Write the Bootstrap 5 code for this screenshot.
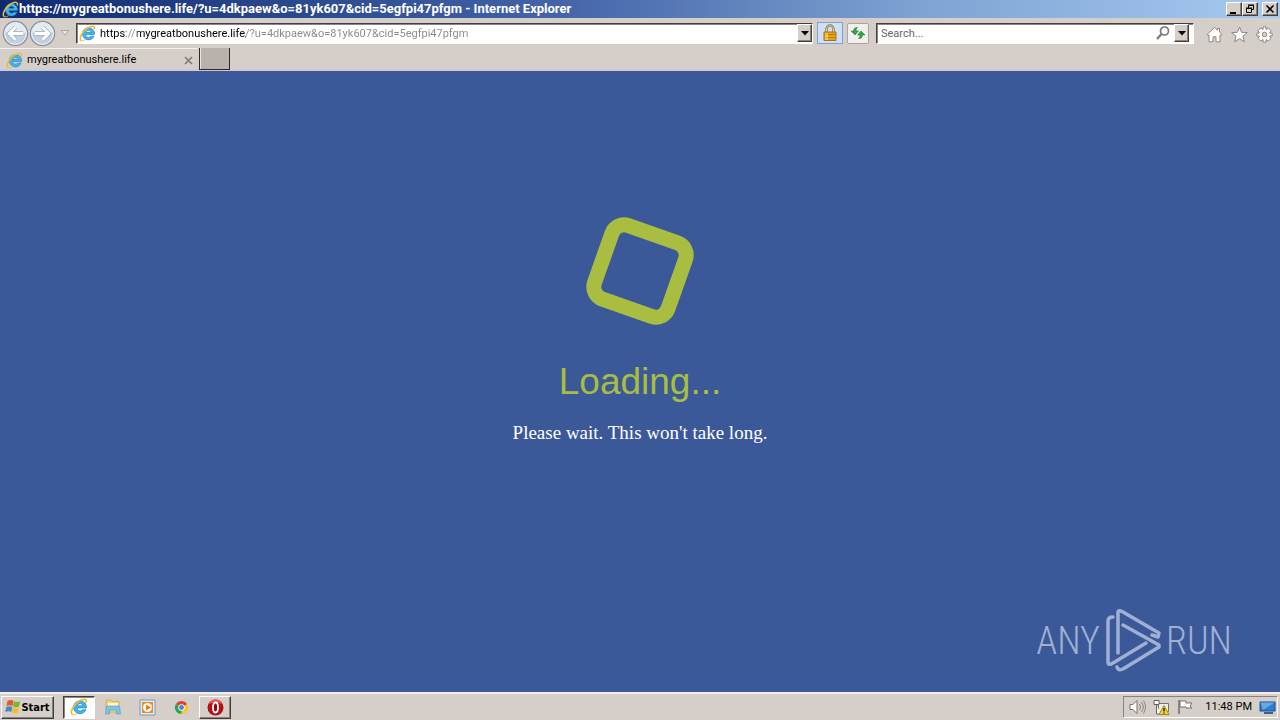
<!DOCTYPE html>
<html lang="en">
<head>
<meta charset="utf-8">
<meta name="viewport" content="width=device-width, initial-scale=1">
<title>Loading</title>
<link href="https://cdn.jsdelivr.net/npm/bootstrap@5.3.0/dist/css/bootstrap.min.css" rel="stylesheet">
<style>
:root{--face:#d6cfc9}
body{font-family:Roboto,sans-serif;font-size:11px;line-height:14px;background:var(--face);color:#000}
svg{display:block;flex:none}
button,input{font:inherit;color:inherit}
.title-strip{height:18px;padding:0 2px;background:linear-gradient(90deg,#0f2a70,#4565a8 44%,#7fa3d3 72%,#a6caf0);color:#fff;font-size:13px;line-height:18px;font-weight:700}
.raised{background:var(--face);border:1px solid;border-color:#fff #404040 #404040 #fff;box-shadow:inset -1px -1px #88827d;padding:0;border-radius:0;display:flex;align-items:center;justify-content:center}
.win-btn{width:16px;height:14px}
.tool-strip{height:30px;padding:0 7px 0 2px}
.flat{background:none;border:0;padding:0}
.recent{padding:0 4px}
.field{height:21px;background:#fff;border:1px solid;border-color:#404040 #fff #fff #404040;box-shadow:inset 1px 1px #8b8581}
.field input{border:0;outline:0;padding:2px 0 0;background-color:transparent;min-width:0}
.address-box{margin-left:2px;padding-left:2px}
.address-text{background:linear-gradient(90deg,#000 26px,#888 26px 37px,#000 37px 146px,#888 146px) text;color:transparent!important}
.search-box{width:318px;margin-left:7px}
.search-box input::placeholder{color:#666;opacity:1}
.drop{width:15px;height:18px}
.secure{width:26px;height:22px;background:#cfe0f6;border:1px solid #7aa3dc}
.reload{width:22px;height:21px;background:#f0efeb;border:1px solid #aaa5a0;border-radius:2px}
.tab-strip{height:23px;border-bottom:2px solid #c9ccd6}
.page-tab{width:198px;padding:2px 5px 0 6px;border-top:1px solid #f4f1ee}
.new-tab{width:31px;height:22px;background:#b9b1ac;border:solid #2c2828;border-width:0 1px 1px 1px;margin-left:1px;padding:0;box-shadow:inset 1px 0 #e9e5e1}
.stage{background:#3b5998;padding-top:145px}
.loading{font:37px/44px "Liberation Sans",sans-serif;color:#a9bd40;margin:34px 0 0}
.wait-note{font:19px/24px "Liberation Serif",serif;color:#fff;margin:17px 0 0}
.watermark{right:48px;bottom:20px;gap:5px;color:#9fb0d4;font:300 38px/60px "Roboto Condensed","Open Sans Condensed",sans-serif}
.task-strip{height:28px;border-top:2px solid #f1eeea;padding:2px 2px 2px 1px}
.task-list{gap:2px;margin-left:9px}
.task-btn{width:32px;height:23px}
.start{width:53px;height:23px;font:700 11px "DejaVu Sans Condensed","DejaVu Sans",sans-serif}
.pressed{background:#fff;border-color:#404040 #fff #fff #404040;box-shadow:inset 1px 1px #888}
.tray{height:22px;gap:7px;border:1px solid;border-color:#88827d #fff #fff #88827d;padding:0 1px 0 5px}
</style>
</head>
<body class="vh-100 d-flex flex-column overflow-hidden">
<svg width="0" height="0" class="position-absolute">
<defs>
<symbol id="ie" viewBox="0 0 18 18"><path d="M16 11.800a6.500 6.500 0 1 1 .4-3.800v2H7.200c.2 3.400 4 3.600 5.200 1.800zM7.300 7.800h5.500c-.4-3-5-3-5.500 0z" fill="#42b4ee" stroke="#2384c8" stroke-width=".7"/><path d="M2.300 16.500C-.8 14 4.500 4.500 12 1.800c3.600-1.200 5 .4 4 3" fill="none" stroke="#eebb2c" stroke-width="1.600"/><path d="M2.300 16.500c1.300.8 3.200 0 4.700-1" fill="none" stroke="#eebb2c"/></symbol>
<symbol id="down" viewBox="0 0 8 5"><path d="M0 0h8L4 4.500z"/></symbol>
<symbol id="disc" viewBox="0 0 28 28"><circle cx="14" cy="14" r="12.500" fill="#c3d0df" stroke="#8b94a0" stroke-width="1.500"/><circle cx="14" cy="14" r="11.300" fill="none" stroke="#f5f8fb"/><path d="M3.500 13a10.500 10.500 0 0 1 21 0q-10 3-21 0" fill="#e3ebf3"/><path d="M14 7.500 7.500 14l6.500 6.500M8 14h14" fill="none" stroke="#9fadbd" stroke-width="4.500"/><path d="M14 7.500 7.500 14l6.500 6.500M8 14h14" fill="none" stroke="#fff" stroke-width="3"/></symbol>
</defs></svg>
<header>
<div class="title-strip d-flex align-items-center">
<svg width="17" height="17"><use href="#ie"/></svg>
<div class="flex-grow-1 text-nowrap">https://mygreatbonushere.life/?u=4dkpaew&amp;o=81yk607&amp;cid=5egfpi47pfgm - Internet Explorer</div>
<button class="raised win-btn text-black" aria-label="Minimize"><svg width="10" height="10"><path d="M1 8h6v2H1z"/></svg></button>
<button class="raised win-btn text-black" aria-label="Restore"><svg width="10" height="10"><path d="M3.500 4V1.500h5v4H7M3 1h6M1.500 4.500h5v4h-5zM1 4h6" fill="none" stroke="#000"/></svg></button>
<button class="raised win-btn ms-1 text-black" aria-label="Close"><svg width="10" height="10"><path d="m1.500 1.500 7 7m0-7-7 7" stroke="#000" stroke-width="1.600"/></svg></button>
</div>
<div class="tool-strip d-flex align-items-center">
<button class="flat" aria-label="Back"><svg width="27" height="27"><use href="#disc"/></svg></button>
<button class="flat" aria-label="Forward"><svg width="27" height="27"><use href="#disc" transform="matrix(-1 0 0 1 27 0)"/></svg></button>
<button class="flat recent" aria-label="Recent pages"><svg width="10" height="6"><path d="M1 .5h8L5 5z" fill="#e9e5e1" stroke="#aca6a1"/></svg></button>
<div class="field address-box d-flex align-items-center flex-grow-1">
<svg width="17" height="17" class="me-1"><use href="#ie"/></svg>
<input class="address-text flex-grow-1" type="text" aria-label="Address" value="https://mygreatbonushere.life/?u=4dkpaew&amp;o=81yk607&amp;cid=5egfpi47pfgm">
<button class="raised drop" aria-label="Show addresses"><svg width="8" height="5"><use href="#down"/></svg></button>
</div>
<button class="secure d-flex align-items-center justify-content-center ms-1 p-0" aria-label="Security report"><svg width="16" height="18" viewBox="0 0 16 18"><path d="M4.500 9V5a3.500 3.500 0 0 1 7 0v4" fill="none" stroke="#8b7340" stroke-width="2.400"/><path d="M4.500 9V5a3.500 3.500 0 0 1 7 0v4" fill="none" stroke="#e4d29a"/><path d="M2 8h12v8.500H2z" fill="#e2a51d" stroke="#a87510"/><path d="M2 10.500h12M2 13.500h12" stroke="#b97c0d"/><path d="M3 9h3v7H3z" fill="#ffda65" opacity=".6"/></svg></button>
<button class="reload d-flex align-items-center justify-content-center ms-1 p-0" aria-label="Refresh"><svg width="16" height="14" viewBox="0 0 16 14"><path d="M7.500 1.500Q4 1 3.500 5H1l4 4 3.500-4H6q-.2-2.500 1.500-3.500zM8.500 12.500q3.500.5 4-3.500H15l-4-4-3.500 4H10q.2 2.500-1.500 3.500z" fill="#35a443" stroke="#16742b" stroke-width=".5"/></svg></button>
<div class="field search-box d-flex align-items-center ps-1">
<input class="flex-grow-1" type="text" aria-label="Search" placeholder="Search...">
<button class="flat me-1" aria-label="Run search"><svg width="14" height="14"><circle cx="8.500" cy="5" r="4" fill="none" stroke="#77777d" stroke-width="1.700"/><path d="m5.500 8-4.500 5" stroke="#77777d" stroke-width="2.200"/></svg></button>
<button class="raised drop me-1" aria-label="Search options"><svg width="8" height="5"><use href="#down"/></svg></button>
</div>
<div class="d-flex gap-2 ms-2 ps-1">
<button class="flat" aria-label="Home"><svg width="17" height="19" viewBox="0 -2 17 19"><path d="M1 8.500 8.500 1.500l3 2.700V2.500h2v3.700L16 8.500l-1 1.200-1-.9v7h-4v-5H7v5H3v-7l-1 .9z" fill="#fff" stroke="#8d8883"/></svg></button>
<button class="flat" aria-label="Favorites"><svg width="17" height="19" viewBox="0 -2 17 19"><path d="m8.500 1 2.100 5.300 5.700.3-4.400 3.600 1.500 5.600-4.900-3.200-4.900 3.200 1.500-5.600L.7 6.600l5.700-.3z" fill="#fff" stroke="#8d8883"/></svg></button>
<button class="flat" aria-label="Tools"><svg width="17" height="19" viewBox="-8.500 -10.500 17 19"><g fill="#fff" stroke="#8d8883"><path d="M-1.500-5-1.300-7.700H1.300L1.500-5 3.700-6.600 6.600-3.700 5-1.500 7.700-1.300V1.300L5 1.500 6.600 3.700 3.700 6.600 1.500 5 1.300 7.700H-1.300L-1.500 5-3.700 6.600-6.600 3.700-5 1.500-7.700 1.300V-1.300L-5-1.500-6.600-3.700-3.700-6.600z"/><circle r="2.300" fill="#d6cfc9"/></g></svg></button>
</div>
</div>
<div class="tab-strip d-flex">
<div class="page-tab d-flex align-items-center"><svg width="17" height="17" class="me-1"><use href="#ie"/></svg><span class="flex-grow-1">mygreatbonushere.life</span><button class="flat" aria-label="Close tab"><svg width="9" height="9"><path d="m1 1 7 7m0-7-7 7" stroke="#807b77" stroke-width="1.700"/></svg></button></div>
<button class="new-tab" aria-label="New tab"></button>
</div>
</header>
<main class="stage flex-grow-1 position-relative text-center">
<svg class="mx-auto" width="110" height="110" viewBox="-55 -55 110 110"><rect x="-39" y="-39" width="78" height="78" rx="13" fill="none" stroke="#a9bd40" stroke-width="15" transform="rotate(19.500)"/></svg>
<h1 class="loading">Loading...</h1>
<p class="wait-note">Please wait. This won't take long.</p>
<div class="watermark position-absolute d-flex align-items-center"><span>ANY</span>
<svg width="56" height="63" viewBox="0 0 56 63"><g fill="none" stroke="#9fb0d4" stroke-width="3.500" stroke-linejoin="round" stroke-linecap="round"><path d="M8 8Q3 8 3 12v41q0 4 5 1l33-20"/><path d="M13 44V4q0-4 5-1l36 21-1 4-6-2"/><path d="m18 16 36 20v2L18 60q-5 2-6-2"/></g></svg>
<span>RUN</span></div>
</main>
<footer class="task-strip d-flex align-items-center">
<button class="raised start"><svg width="16" height="16" viewBox="0 0 16 16"><path d="M2.500 2q3-2 6 0L7.500 7q-3-1.500-6 0z" fill="#e8562a"/><path d="M9 2.300q3 1.500 6 0L14 7.500q-3 1.500-6 0z" fill="#77b82f"/><path d="M1.300 8q3-1.500 6 0l-1 5q-3-1.500-6 0z" fill="#3c8bd0"/><path d="M7.800 8.500q3 1.500 6 0l-1 5q-3 1.500-6 0z" fill="#f5bd24"/></svg>Start</button>
<div class="task-list d-flex align-items-center">
<button class="raised pressed task-btn" aria-label="Internet Explorer"><svg width="18" height="18"><use href="#ie"/></svg></button>
<button class="flat task-btn d-flex align-items-center justify-content-center" aria-label="Explorer"><svg width="18" height="18" viewBox="0 0 18 18"><path d="M2 2h5l1 1.500h7V14H2z" fill="#f0d477" stroke="#c9a746" stroke-width=".7"/><path d="M4 5h10v3H4z" fill="#fff8c9"/><path d="M2.500 8h13l1 8h-4v-4h-7v4h-4z" fill="#7fc3e6" stroke="#4a9ac7" stroke-width=".6"/></svg></button>
<button class="flat task-btn d-flex align-items-center justify-content-center" aria-label="Media Player"><svg width="17" height="17" viewBox="0 0 17 17"><path d="M1 1h15v15H1z" fill="#dcebf5" stroke="#6a9ec6"/><path d="M3 3h11v11H3z" fill="#f28a1c"/><circle cx="8.500" cy="8.500" r="4.500" fill="#fff"/><path d="m7 5.500 5 3-5 3z" fill="#e87a10"/></svg></button>
<button class="flat task-btn d-flex align-items-center justify-content-center" aria-label="Chrome"><svg width="15" height="15" viewBox="-8 -8 16 16"><path d="M0 0-6.100-3.500A7 7 0 0 1 6.100-3.500z" fill="#e04335"/><path d="M0 0 6.100-3.500A7 7 0 0 1 0 7z" fill="#f9c828"/><path d="M0 0V7A7 7 0 0 1-6.100-3.500z" fill="#2da44f"/><circle r="3.400" fill="#fff"/><circle r="2.600" fill="#4285dc"/></svg></button>
<button class="raised task-btn" aria-label="Opera"><svg width="17" height="17" viewBox="0 0 17 17"><circle cx="8.500" cy="8.500" r="8" fill="#b50f16"/><path d="M2 5a7 7 0 0 1 13 0q-6-3-13 0" fill="#e4595c"/><ellipse cx="8.500" cy="8.500" rx="2.500" ry="5" fill="#8c0a10" stroke="#fff" stroke-width="1.800"/></svg></button>
</div>
<div class="tray d-flex align-items-center ms-auto">
<svg width="17" height="16" viewBox="0 0 17 16"><path d="M1 5.500h3l4-4v13l-4-4H1z" fill="#fff" stroke="#77726e"/><path d="M10.500 5q2 3 0 6M12.500 3q3.500 5 0 10M14.500 1.500q4 6.500 0 13" fill="none" stroke="#8a8581"/></svg>
<svg width="17" height="17" viewBox="0 0 17 17"><path d="M5.500 4.500h10v8h-10z" fill="#eee" stroke="#77726e"/><path d="M1 1.500h5v4H1zM3.500 6v9H8" fill="#fff" stroke="#66615d"/><path d="m11 6.500 5 9H6z" fill="#f5d238" stroke="#a58a18"/><path d="M11 9v3.500m0 1v1" stroke="#000" stroke-width="1.200"/></svg>
<svg width="17" height="16" viewBox="0 0 17 16"><path d="M2 1v14" stroke="#77726e" stroke-width="1.600"/><path d="M3 2h6v2h6l-2 3 2 2H9V8H3z" fill="#fff" stroke="#77726e"/></svg>
<span class="text-nowrap ms-1">11:48 PM</span>
<svg width="17" height="15" viewBox="0 0 17 15"><path d="M1 2h15v9H1z" fill="#2f7ed0" stroke="#1b4c8c"/><path d="M1.500 2.500h14L4 10z" fill="#65aae6"/><path d="M5 13h9" stroke="#3f5f88" stroke-width="2"/></svg>
</div>
</footer>
<script src="https://cdn.jsdelivr.net/npm/bootstrap@5.3.0/dist/js/bootstrap.bundle.min.js"></script>
</body>
</html>
